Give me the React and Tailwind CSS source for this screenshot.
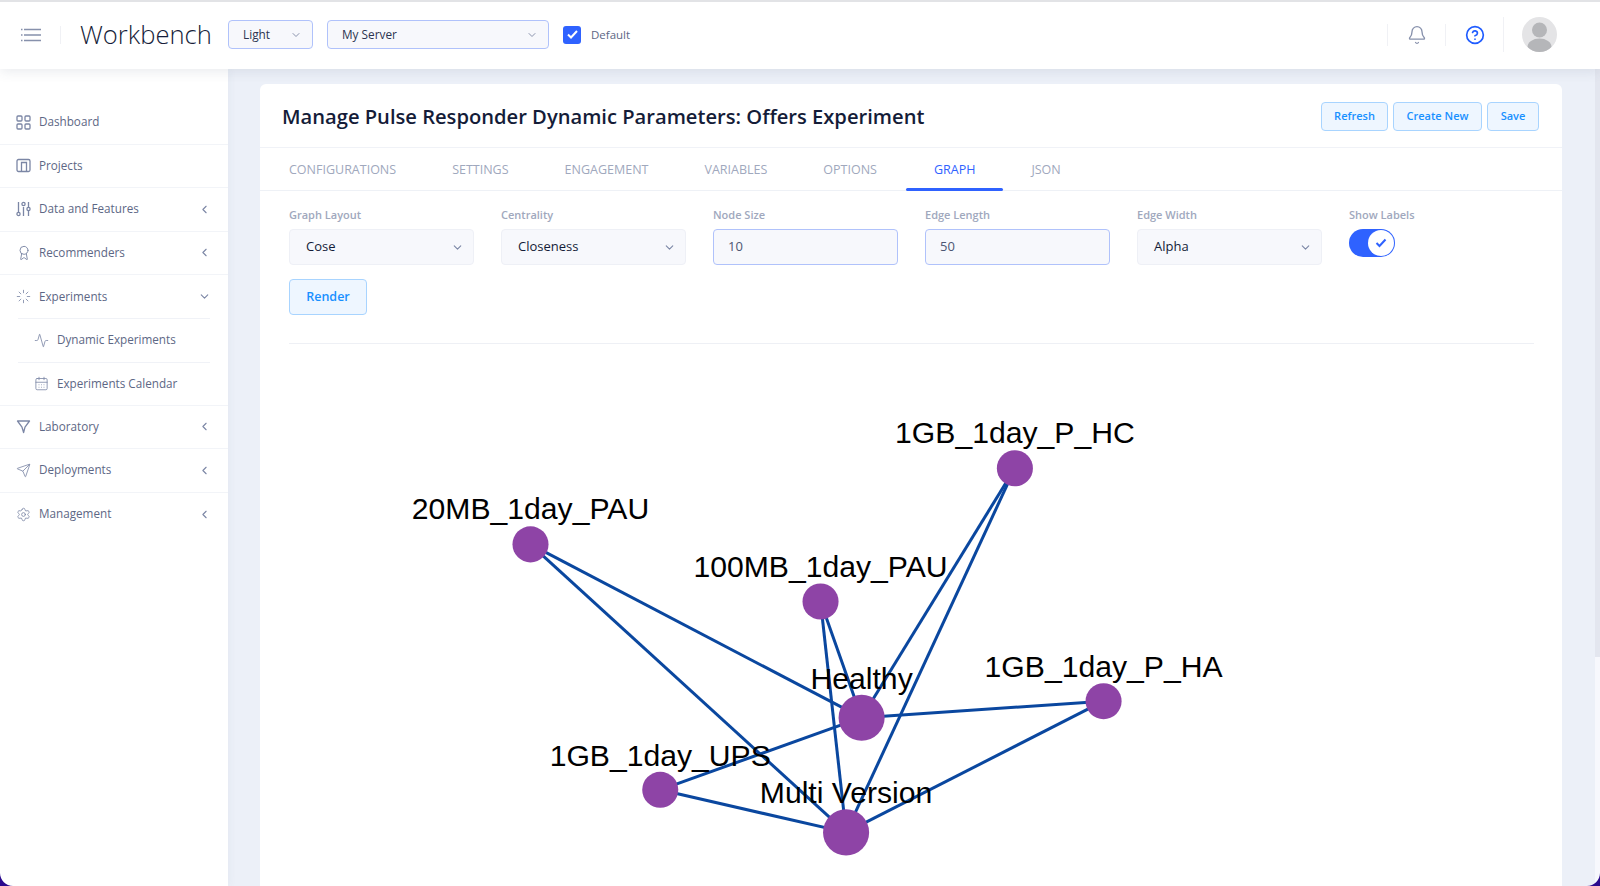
import { Activity, Award, Bell, CalendarDays, ChevronDown, ChevronLeft, CircleHelp, Loader, Send, Settings } from "lucide-react";

const nodes = [
  { label: "1GB_1day_P_HC", x: 1013.5, y: 468, r: 18, ly: 443 },
  { label: "20MB_1day_PAU", x: 530, y: 544, r: 18, ly: 519 },
  { label: "100MB_1day_PAU", x: 819.5, y: 601, r: 18, ly: 577 },
  { label: "1GB_1day_P_HA", x: 1102, y: 700.5, r: 18, ly: 676 },
  { label: "1GB_1day_UPS", x: 659.5, y: 789, r: 18, ly: 765 },
  { label: "Healthy", x: 860.5, y: 717, r: 23, ly: 688 },
  { label: "Multi Version", x: 845, y: 831.5, r: 23, ly: 802 },
];

function DashboardIcon() {
  return (
    <svg width="15" height="15" viewBox="0 0 15 15" fill="none" stroke="currentColor" strokeWidth="1.3">
      <rect x="1" y="1" width="5" height="5" rx="1" />
      <rect x="9" y="1" width="5" height="5" rx="1" />
      <rect x="1" y="9" width="5" height="5" rx="1" />
      <rect x="9" y="9" width="5" height="5" rx="1" />
    </svg>
  );
}

function ProjectsIcon() {
  return (
    <svg width="15" height="15" viewBox="0 0 15 15" fill="none" stroke="currentColor" strokeWidth="1.3">
      <rect x="1" y="1.5" width="13" height="12" rx="1.5" />
      <path d="M5.5 13V4.5h5V13" />
    </svg>
  );
}

function SlidersIcon() {
  return (
    <svg width="15" height="16" viewBox="0 0 15 16" fill="none" stroke="currentColor" strokeWidth="1.3">
      <path d="M2.5 1v10M7.5 6v9M12.5 1v5M12.5 10v5" />
      <circle cx="2.5" cy="13" r="1.6" />
      <circle cx="7.5" cy="3" r="1.6" />
      <circle cx="12.5" cy="8" r="1.6" />
    </svg>
  );
}

function FunnelIcon() {
  return (
    <svg width="15" height="15" viewBox="0 0 15 15" fill="none" stroke="currentColor" strokeWidth="1.3" strokeLinejoin="round">
      <path d="M1.5 2h12L9 8.2 7.6 13.5 6 8.2z" />
    </svg>
  );
}

function NavRow({ icon, label, chevron }) {
  return (
    <div className="h-[43.5px] flex items-center border-b border-[#f2f4f8] pl-[16px] pr-[17px] text-[#5d6785]">
      <span className="w-[23px] flex items-center text-[#7b86a5]">{icon}</span>
      <span className="text-[11.7px] flex-1 whitespace-nowrap">{label}</span>
      {chevron === "left" && <ChevronLeft size={13} className="text-[#7b86a5]" />}
    </div>
  );
}

function HeaderSelect({ value, width }) {
  return (
    <div className={`${width} h-[29px] rounded-[4px] border border-[#b0c2fb] bg-[#f7f8fc] flex items-center justify-between pl-[14px] pr-[10px]`}>
      <span className="text-[11.8px] text-[#2c3450]">{value}</span>
      <ChevronDown size={12} className="text-[#8a93ad]" />
    </div>
  );
}

function FieldSelect({ label, value }) {
  return (
    <div>
      <div className="text-[11px] font-semibold text-[#a0a8bd] h-[22px] leading-[14px] pt-[1px]">{label}</div>
      <div className="h-[36px] rounded-[4px] border border-[#eef0f6] bg-[#f7f8fc] flex items-center justify-between pl-[16px] pr-[9px]">
        <span className="text-[13px] text-[#141c38]">{value}</span>
        <ChevronDown size={13} className="text-[#7b86a5]" />
      </div>
    </div>
  );
}

function FieldInput({ label, value }) {
  return (
    <div>
      <div className="text-[11px] font-semibold text-[#a0a8bd] h-[22px] leading-[14px] pt-[1px]">{label}</div>
      <div className="h-[36px] rounded-[4px] border border-[#b0c2fb] bg-[#f7f8fc] flex items-center pl-[14px]">
        <span className="text-[13px] text-[#4d5673]">{value}</span>
      </div>
    </div>
  );
}

function ActionButton({ children, width }) {
  return (
    <button className={`${width} h-[29px] rounded-[4px] border border-[#a8d4ff] bg-[#eef6ff] text-[11px] font-semibold text-[#1890ff]`}>
      {children}
    </button>
  );
}

export default function App() {
  const tabs = ["CONFIGURATIONS", "SETTINGS", "ENGAGEMENT", "VARIABLES", "OPTIONS", "GRAPH", "JSON"];
  const healthy = nodes[5];
  const multi = nodes[6];

  return (
    <div className="relative h-screen overflow-hidden flex flex-col bg-white font-['Open_Sans',sans-serif]">
      <header className="relative z-20 h-[69px] shrink-0 bg-white border-t-2 border-[#e2e3e6] pb-[2px] shadow-[0_2px_12px_rgba(60,70,110,0.12)] flex items-center">
        <div className="w-[60px] flex justify-center pl-[1px]">
          <svg width="20" height="14" viewBox="0 0 20 14" stroke="#8791ac" strokeWidth="1.7">
            <path d="M3 1.5h17M3 7h17M3 12.5h17M0 1.5h1.5M0 7h1.5M0 12.5h1.5" />
          </svg>
        </div>
        <div className="w-px h-[18px] bg-[#f0f1f5]" />
        <div className="ml-[19px] w-[148px] text-[25.6px] font-light text-[#161d3a] leading-none">Workbench</div>
        <HeaderSelect value="Light" width="w-[85px]" />
        <div className="w-[14px]" />
        <HeaderSelect value="My Server" width="w-[222px]" />
        <div className="ml-[14px] w-[18px] h-[18px] rounded-[3px] bg-[#2f62ff] flex items-center justify-center">
          <svg width="11" height="9" viewBox="0 0 11 9" fill="none" stroke="white" strokeWidth="2">
            <path d="M1 4.5 4 7.5 10 1" />
          </svg>
        </div>
        <div className="ml-[10px] text-[11.5px] text-[#5d6785]">Default</div>
        <div className="flex-1" />
        <div className="w-px h-[22px] bg-[#f0f1f5]" />
        <div className="w-[57px] flex justify-center"><Bell size={20} strokeWidth={1.6} className="text-[#8791ac]" /></div>
        <div className="w-px h-[22px] bg-[#f0f1f5]" />
        <div className="w-[57px] flex justify-center"><CircleHelp size={20} strokeWidth={2} className="text-[#1f5cff]" /></div>
        <div className="w-px h-[35px] bg-[#f0f1f5]" />
        <div className="ml-[18px] mr-[43px] w-[35px] h-[35px] rounded-full overflow-hidden bg-[#e4e4e6]">
          <svg width="35" height="35" viewBox="0 0 35 35" fill="#b5b6b9">
            <circle cx="17.5" cy="13" r="7.5" />
            <ellipse cx="17.5" cy="30" rx="12" ry="8.5" />
          </svg>
        </div>
      </header>

      <div className="flex flex-1 min-h-0">
        <aside className="relative z-10 w-[228px] shrink-0 bg-white pt-[32px] shadow-[2px_0_8px_rgba(60,70,110,0.04)]">
          <NavRow icon={<DashboardIcon />} label="Dashboard" />
          <NavRow icon={<ProjectsIcon />} label="Projects" />
          <NavRow icon={<SlidersIcon />} label="Data and Features" chevron="left" />
          <NavRow icon={<Award size={16} strokeWidth={1.4} />} label="Recommenders" chevron="left" />
          <div className="h-[43px] flex items-center pl-[16px] pr-[17px] text-[#5d6785]">
            <span className="w-[23px] flex items-center text-[#7b86a5]"><Loader size={15} strokeWidth={1.3} /></span>
            <span className="text-[11.7px] flex-1">Experiments</span>
            <ChevronDown size={13} className="text-[#7b86a5]" />
          </div>
          <div className="border-b border-[#f2f4f8]">
            <div className="mx-[18px] border-t border-[#f0f2f7]" />
            <div className="h-[43.5px] mx-[18px] flex items-center border-b border-[#f0f2f7] text-[#5d6785]">
              <span className="w-[23px] ml-[16px] flex items-center text-[#7b86a5]"><Activity size={15} strokeWidth={1.3} /></span>
              <span className="text-[11.7px]">Dynamic Experiments</span>
            </div>
            <div className="h-[42px] mx-[18px] flex items-center text-[#5d6785]">
              <span className="w-[23px] ml-[16px] flex items-center text-[#7b86a5]"><CalendarDays size={15} strokeWidth={1.3} /></span>
              <span className="text-[11.7px]">Experiments Calendar</span>
            </div>
          </div>
          <NavRow icon={<FunnelIcon />} label="Laboratory" chevron="left" />
          <NavRow icon={<Send size={15} strokeWidth={1.3} />} label="Deployments" chevron="left" />
          <div className="h-[43.5px] flex items-center pl-[16px] pr-[17px] text-[#5d6785]">
            <span className="w-[23px] flex items-center text-[#7b86a5]"><Settings size={15} strokeWidth={1.3} /></span>
            <span className="text-[11.7px] flex-1">Management</span>
            <ChevronLeft size={13} className="text-[#7b86a5]" />
          </div>
        </aside>

        <main className="flex-1 min-w-0 bg-[#ecf0f8] flex pt-[15px] pl-[32px]">
          <section className="w-[1302px] shrink-0 bg-white rounded-t-[6px] flex flex-col min-h-0">
            <div className="h-[64px] shrink-0 border-b border-[#f0f2f7] flex items-center justify-between pt-[1px] pl-[22px] pr-[23px]">
              <h1 className="text-[20.15px] font-semibold text-[#141c38] whitespace-nowrap">Manage Pulse Responder Dynamic Parameters: Offers Experiment</h1>
              <div className="flex gap-[5px]">
                <ActionButton width="w-[67px]">Refresh</ActionButton>
                <ActionButton width="w-[89px]">Create New</ActionButton>
                <ActionButton width="w-[52px]">Save</ActionButton>
              </div>
            </div>

            <div className="h-[43px] shrink-0 border-b border-[#eef1f6] flex pl-[1px]">
              {tabs.map((t) => (
                <div
                  key={t}
                  className={t === "GRAPH"
                    ? "relative px-[28px] pt-[2px] ml-[1px] flex items-center text-[12.5px] text-[#2f62ff]"
                    : "px-[28px] pt-[2px] flex items-center text-[12.5px] text-[#a0a8bd]"}
                >
                  {t}
                  {t === "GRAPH" && <span className="absolute left-0 right-0 bottom-[-1px] h-[3px] rounded-[2px] bg-[#2f62ff]" />}
                </div>
              ))}
            </div>

            <div className="shrink-0 mx-[29px] mr-[28px] pt-[16px] border-b border-[#eef0f5] h-[153px]">
              <div className="grid grid-cols-[185px_185px_185px_185px_185px_46px] gap-x-[27px]">
                <FieldSelect label="Graph Layout" value="Cose" />
                <FieldSelect label="Centrality" value="Closeness" />
                <FieldInput label="Node Size" value="10" />
                <FieldInput label="Edge Length" value="50" />
                <FieldSelect label="Edge Width" value="Alpha" />
                <div className="w-[80px]">
                  <div className="text-[11px] font-semibold text-[#a0a8bd] h-[22px] leading-[14px] pt-[1px] whitespace-nowrap">Show Labels</div>
                  <div className="w-[46px] h-[28px] rounded-full bg-[#2f62ff] flex items-center justify-end pr-[1px]">
                    <div className="w-[26px] h-[26px] rounded-full bg-white flex items-center justify-center">
                      <svg width="12" height="10" viewBox="0 0 12 10" fill="none" stroke="#2f62ff" strokeWidth="2">
                        <path d="M1.5 5 4.5 8 10.5 1.5" />
                      </svg>
                    </div>
                  </div>
                </div>
              </div>
              <button className="mt-[14px] w-[78px] h-[36px] rounded-[4px] border border-[#a8d4ff] bg-[#eef6ff] text-[12.5px] font-semibold text-[#1890ff]">
                Render
              </button>
            </div>

            <svg className="flex-1 min-h-0 w-full" viewBox="260 344 1302 541" preserveAspectRatio="xMinYMin slice">
              {nodes.slice(0, 5).map((n) => (
                <g key={n.label} stroke="#0a479f" strokeWidth="3">
                  <line x1={n.x} y1={n.y} x2={healthy.x} y2={healthy.y} />
                  <line x1={n.x} y1={n.y} x2={multi.x} y2={multi.y} />
                </g>
              ))}
              {nodes.map((n) => (
                <circle key={n.label} cx={n.x} cy={n.y} r={n.r} fill="#8e44a6" />
              ))}
              {nodes.map((n) => (
                <text key={n.label} x={n.x} y={n.ly} textAnchor="middle" fontSize="30.1" fill="#000" fontFamily="'Liberation Sans', Arial, sans-serif">
                  {n.label}
                </text>
              ))}
            </svg>
          </section>

          <div className="flex-1" />
          <div className="-mt-[15px] w-[5px] shrink-0 bg-[#f7f8fd] flex flex-col">
            <div className="h-[588px] bg-[#e3e6ef]" />
          </div>
        </main>
      </div>

      {/* window corners, the desktop shows through behind them */}
      <svg className="absolute left-0 bottom-0 z-30" width="13" height="13" viewBox="0 0 13 13" fill="#2b0a8e">
        <path d="M0 0C0 7 6 13 13 13H0z" />
      </svg>
      <svg className="absolute right-0 bottom-0 z-30" width="13" height="13" viewBox="0 0 13 13" fill="#2b0a8e">
        <path d="M13 0C13 7 7 13 0 13H13z" />
      </svg>
    </div>
  );
}
